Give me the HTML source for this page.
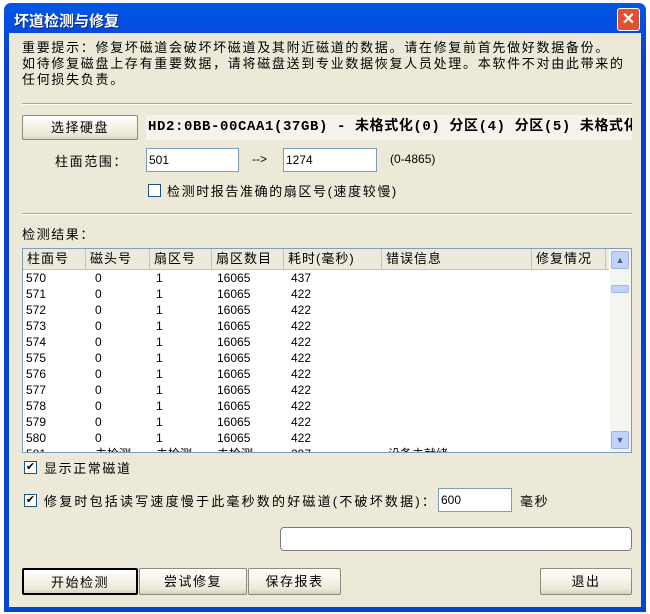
<!DOCTYPE html>
<html><head><meta charset="utf-8"><style>
*{box-sizing:border-box;margin:0;padding:0}
body{width:650px;height:614px;background:#fff;position:relative;overflow:hidden;font-family:"Liberation Sans","Noto Sans CJK SC",sans-serif;font-size:12px;color:#000}
.a{position:absolute;white-space:nowrap}
.w{letter-spacing:1.6px;font-size:13px}
#win{left:4px;top:3px;width:642px;height:609px;background:linear-gradient(#0058e6,#0a3fd0 10%,#0046d5);border-radius:7px 7px 0 0}
#body{left:9px;top:33px;width:632px;height:574px;background:#ece9d8}
.title{left:14px;top:10px;color:#fff;font-weight:bold;font-size:15px;text-shadow:1px 1px #0a2a80}
.close{left:617px;top:8px;width:23px;height:23px;background:#e0512e;border:1px solid #fff;border-radius:3px;color:#fff;font-weight:bold;font-size:16px;text-align:center;line-height:21px}
.btn{background:linear-gradient(#fff,#ece9d8 80%,#d6d0c0);border:1px solid #8a8a80;border-radius:2px;text-align:center;font-size:13px;letter-spacing:1.5px}
.inp{background:#fff;border:1px solid #7f9db9;padding-left:2px;font-size:12px;line-height:22px}
.sep{height:2px;border-top:1px solid #aca899;border-bottom:1px solid #fff}
.cb{width:13px;height:13px;border:1px solid #1c5180;background:#fff;font-size:11px;line-height:11px;text-align:center}
.hdr span{position:absolute;top:0;height:20px;line-height:20px;border-right:1px solid #c8c4b4;padding-left:4px;font-size:13px;letter-spacing:1px}
.row{position:absolute;left:26px;height:16px;line-height:16px;font-size:12px}
.row span{position:absolute}
</style></head><body>
<div class="a" id="win"></div>
<div class="a" id="body"></div>
<div class="a title">坏道检测与修复</div>
<div class="a close">✕</div>
<div class="a" style="left:22px;top:40px;line-height:16px;font-size:13px;letter-spacing:1.7px">重要提示：修复坏磁道会破坏坏磁道及其附近磁道的数据。请在修复前首先做好数据备份。<br>如待修复磁盘上存有重要数据，请将磁盘送到专业数据恢复人员处理。本软件不对由此带来的<br>任何损失负责。</div>
<div class="a sep" style="left:22px;top:103px;width:610px"></div>
<div class="a btn" style="left:22px;top:115px;width:116px;height:25px;line-height:23px">选择硬盘</div>
<div class="a" style="left:146px;top:115px;width:486px;height:25px;line-height:25px;padding-left:2px;font-weight:bold;font-size:14px;letter-spacing:0.6px;font-family:'Liberation Mono','Noto Sans CJK SC',monospace;overflow:hidden;background:#f4f3ee">HD2:0BB-00CAA1(37GB) - 未格式化(0) 分区(4) 分区(5) 未格式化</div>
<div class="a w" style="left:55px;top:151px">柱面范围：</div>
<div class="a inp" style="left:146px;top:148px;width:93px;height:24px">501</div>
<div class="a" style="left:252px;top:152px">--&gt;</div>
<div class="a inp" style="left:283px;top:148px;width:94px;height:24px">1274</div>
<div class="a" style="left:390px;top:152px">(0-4865)</div>
<div class="a cb" style="left:148px;top:184px"></div>
<div class="a w" style="left:167px;top:181px">检测时报告准确的扇区号(速度较慢)</div>
<div class="a sep" style="left:22px;top:213px;width:610px"></div>
<div class="a w" style="left:22px;top:224px">检测结果：</div>
<div class="a" style="left:22px;top:248px;width:610px;height:205px;background:#fff;border:1px solid #7f9db9;overflow:hidden">
 <div class="a hdr" style="left:0;top:0;width:586px;height:21px;background:#ebeadb;border-bottom:1px solid #c8c4b4">
  <span style="left:0;width:63px">柱面号</span><span style="left:63px;width:64px">磁头号</span><span style="left:127px;width:62px">扇区号</span><span style="left:189px;width:72px">扇区数目</span><span style="left:261px;width:98px">耗时(毫秒)</span><span style="left:359px;width:150px">错误信息</span><span style="left:509px;width:74px">修复情况</span>
 </div>
 <div class="a" style="left:587px;top:0;width:21px;height:203px;background:#f4f4f0"></div>
 <div class="a" style="left:588px;top:2px;width:18px;height:18px;background:#c1d3fb;border:1px solid #a0b4e8;border-radius:2px;text-align:center;font-size:9px;color:#4d6185;line-height:16px">▲</div>
 <div class="a" style="left:588px;top:36px;width:18px;height:8px;background:#c1d3fb;border:1px solid #a0b4e8;border-radius:2px"></div>
 <div class="a" style="left:588px;top:182px;width:18px;height:18px;background:#c1d3fb;border:1px solid #a0b4e8;border-radius:2px;text-align:center;font-size:9px;color:#4d6185;line-height:16px">▼</div>
</div>
<div id="rows"></div>
<script>
var h='';for(var i=0;i<11;i++){h+='<div class="row" style="top:'+(270+i*16)+'px"><span style="left:0">'+(570+i)+'</span><span style="left:69px">0</span><span style="left:130px">1</span><span style="left:191px">16065</span><span style="left:265px">'+(i?422:437)+'</span></div>';}
h+='<div class="a" style="left:23px;top:446px;width:585px;height:6px;overflow:hidden"><div class="row" style="left:3px;top:0;"><span style="left:0">581</span><span style="left:69px">未检测</span><span style="left:130px">未检测</span><span style="left:191px">未检测</span><span style="left:265px">297</span><span style="left:362px">设备未就绪</span></div></div>';
document.getElementById('rows').innerHTML=h;
</script>
<div class="a cb" style="left:24px;top:461px">✔</div>
<div class="a w" style="left:44px;top:458px">显示正常磁道</div>
<div class="a cb" style="left:24px;top:494px">✔</div>
<div class="a w" style="left:44px;top:491px;letter-spacing:2.2px">修复时包括读写速度慢于此毫秒数的好磁道(不破坏数据)：</div>
<div class="a inp" style="left:438px;top:488px;width:74px;height:24px">600</div>
<div class="a w" style="left:520px;top:491px">毫秒</div>
<div class="a" style="left:280px;top:527px;width:352px;height:24px;background:#fff;border:1px solid #7a7a7a;border-radius:4px"></div>
<div class="a btn" style="left:22px;top:568px;width:116px;height:27px;line-height:25px;border:2px solid #000">开始检测</div>
<div class="a btn" style="left:139px;top:568px;width:108px;height:27px;line-height:25px">尝试修复</div>
<div class="a btn" style="left:248px;top:568px;width:93px;height:27px;line-height:25px">保存报表</div>
<div class="a btn" style="left:540px;top:568px;width:92px;height:27px;line-height:25px">退出</div>
</body></html>
